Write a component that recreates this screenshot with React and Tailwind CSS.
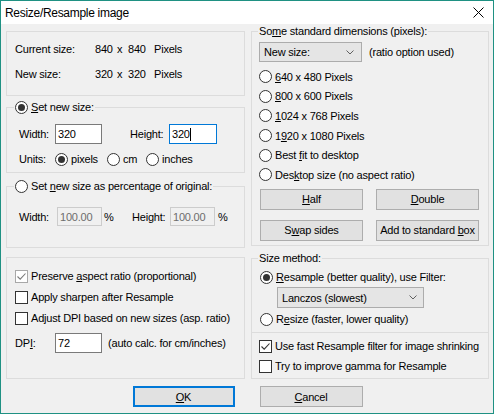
import React from "react";

function Radio({ on, children, className = "" }) {
  return (
    <div className={`flex items-center h-[14px] ${className}`}>
      <span className="w-[13px] h-[13px] rounded-full border border-[#333333] bg-white flex items-center justify-center shrink-0">
        {on && <span className="w-[7px] h-[7px] rounded-full bg-[#333333]" />}
      </span>
      <span className="ml-[3px] whitespace-nowrap">{children}</span>
    </div>
  );
}

function Check({ on, gray, children, className = "" }) {
  return (
    <div className={`flex items-center h-[14px] ${className}`}>
      <span className={`w-[13px] h-[13px] border bg-white flex items-center justify-center shrink-0 ${gray ? "border-[#a8a8a8]" : "border-[#333333]"}`}>
        {on && (
          <svg width="11" height="11" viewBox="0 0 11 11">
            <path d="M1.5 5.5 L4.2 8.2 L9.5 2.5" fill="none" stroke={gray ? "#7a7a7a" : "#333333"} strokeWidth="1.1" />
          </svg>
        )}
      </span>
      <span className="ml-[3px] whitespace-nowrap">{children}</span>
    </div>
  );
}

function Group({ label, left = "left-[6px]", className = "", children }) {
  return (
    <div className={`relative border border-[#dcdcdc] ${className}`}>
      {label && (
        <div className={`absolute -top-[8px] ${left} px-[1px] bg-[#f0f0f0] flex items-center h-[14px]`}>
          {label}
        </div>
      )}
      {children}
    </div>
  );
}

function Btn({ children, className = "" }) {
  return (
    <div className={`w-[103px] h-[21px] bg-[#e1e1e1] border border-[#adadad] flex items-center justify-center ${className}`}>
      <span className="whitespace-nowrap">{children}</span>
    </div>
  );
}

function Chevron() {
  return (
    <svg width="8" height="5" viewBox="0 0 8 5">
      <path d="M0.5 0.5 L4 4 L7.5 0.5" fill="none" stroke="#606060" strokeWidth="1" />
    </svg>
  );
}

function Input({ value, w, h = "h-[20px]", focus, disabled }) {
  const border = focus ? "border-[#0078d7]" : disabled ? "border-[#cccccc]" : "border-[#7a7a7a]";
  return (
    <div className={`${w} ${h} border ${border} ${disabled ? "bg-[#f0f0f0] text-[#6d6d6d]" : "bg-white"} flex items-center pl-[2px]`}>
      {value}
      {focus && <span className="w-px h-[13px] bg-black" />}
    </div>
  );
}

export default function App() {
  return (
    <div className="w-[494px] h-[414px] border border-[#1f9183] bg-[#f0f0f0] flex flex-col overflow-hidden text-[11px] leading-[14px] tracking-[-0.2px] text-black font-['Liberation_Sans',Arial,sans-serif]">
      <div className="h-[23px] bg-white flex items-center justify-between pl-[4px] pr-[9px] shrink-0">
        <span className="text-[12px] tracking-[-0.3px]">Resize/Resample image</span>
        <svg width="11" height="11" viewBox="0 0 11 11">
          <path d="M0.5 0.5 L10.5 10.5 M10.5 0.5 L0.5 10.5" stroke="#000" strokeWidth="1" />
        </svg>
      </div>

      <div className="pl-[5px] pr-[4px] pt-[7px]">
        <div className="flex gap-[6px]">
          {/* left column */}
          <div className="w-[239px] flex flex-col">
            <Group className="h-[65px] pt-[10px] pl-[8px]">
              <div className="flex h-[14px] items-center">
                <span className="w-[80px]">Current size:</span>
                <span className="w-[22px]">840</span>
                <span className="w-[11px]">x</span>
                <span className="w-[26px]">840</span>
                <span>Pixels</span>
              </div>
              <div className="flex h-[14px] items-center mt-[11px]">
                <span className="w-[80px]">New size:</span>
                <span className="w-[22px]">320</span>
                <span className="w-[11px]">x</span>
                <span className="w-[26px]">320</span>
                <span>Pixels</span>
              </div>
            </Group>

            <Group
              className="mt-[11px] h-[66px] pt-[16px] pl-[12px]"
              left="left-[7px]"
              label={<Radio on><u>S</u>et new size:</Radio>}
            >
              <div className="flex items-center">
                <span className="w-[36px]">Width:</span>
                <Input value="320" w="w-[47px]" />
                <span className="ml-[28px] w-[39px]">Height:</span>
                <Input value="320" w="w-[48px]" focus />
              </div>
              <div className="flex items-center mt-[8px] h-[14px]">
                <span className="w-[36px]">Units:</span>
                <Radio on className="w-[52px]">pixels</Radio>
                <Radio className="w-[39px]">cm</Radio>
                <Radio>inches</Radio>
              </div>
            </Group>

            <Group
              className="mt-[13px] h-[62px] pt-[20px] pl-[12px]"
              left="left-[7px]"
              label={<Radio>Set <u>n</u>ew size as percentage of original:</Radio>}
            >
              <div className="flex items-center">
                <span className="w-[38px]">Width:</span>
                <Input value="100.00" w="w-[45px]" h="h-[19px]" disabled />
                <span className="ml-[2px] w-[28px]">%</span>
                <span className="w-[38px]">Height:</span>
                <Input value="100.00" w="w-[45px]" h="h-[19px]" disabled />
                <span className="ml-[3px]">%</span>
              </div>
            </Group>

            <Group className="mt-[9px] h-[122px] pt-[11px] pl-[8px]">
              <div className="flex flex-col gap-[7px]">
                <Check on gray>Preserve <u>a</u>spect ratio (proportional)</Check>
                <Check>Apply sharpen after Resample</Check>
                <Check>Adjust DPI based on new sizes (asp. ratio)</Check>
              </div>
              <div className="flex items-center mt-[8px]">
                <span className="w-[40px]">DP<u>I</u>:</span>
                <Input value="72" w="w-[47px]" />
                <span className="ml-[6px]">(auto calc. for cm/inches)</span>
              </div>
            </Group>
          </div>

          {/* right column */}
          <div className="w-[238px] flex flex-col">
            <Group
              className="h-[215px] pt-[10px] pl-[7px]"
              label={<span>So<u>m</u>e standard dimensions (pixels):</span>}
            >
              <div className="flex items-center">
                <div className="w-[103px] h-[20px] bg-[#e5e5e5] border border-[#acacac] flex items-center justify-between pl-[4px] pr-[7px]">
                  <span>New size:</span>
                  <Chevron />
                </div>
                <span className="ml-[7px]">(ratio option used)</span>
              </div>
              <div className="mt-[5px] flex flex-col">
                <div className="h-[19.6px] flex items-center"><Radio><u>6</u>40 x 480 Pixels</Radio></div>
                <div className="h-[19.6px] flex items-center"><Radio><u>8</u>00 x 600 Pixels</Radio></div>
                <div className="h-[19.6px] flex items-center"><Radio><u>1</u>024 x 768 Pixels</Radio></div>
                <div className="h-[19.6px] flex items-center"><Radio>1<u>9</u>20 x 1080 Pixels</Radio></div>
                <div className="h-[19.6px] flex items-center"><Radio>Best <u>f</u>it to desktop</Radio></div>
                <div className="h-[19.6px] flex items-center"><Radio>Des<u>k</u>top size (no aspect ratio)</Radio></div>
              </div>
              <div className="flex mt-[4px] ml-[1px]">
                <Btn><u>H</u>alf</Btn>
                <Btn className="ml-[13px]"><u>D</u>ouble</Btn>
              </div>
              <div className="flex mt-[10px] ml-[1px]">
                <Btn>S<u>w</u>ap sides</Btn>
                <Btn className="ml-[13px]">Add to standard <u>b</u>ox</Btn>
              </div>
            </Group>

            <Group
              className="mt-[12px] h-[75px] pt-[11px] pl-[8px]"
              label={<span>Size method:</span>}
            >
              <Radio on><u>R</u>esample (better quality), use Filter:</Radio>
              <div className="mt-[3px] ml-[17px] w-[147px] h-[21px] bg-[#e5e5e5] border border-[#acacac] flex items-center justify-between pl-[4px] pr-[6px]">
                <span>Lanczos (slowest)</span>
                <Chevron />
              </div>
              <Radio className="mt-[4px]">R<u>e</u>size (faster, lower quality)</Radio>
            </Group>

            <Group className="h-[46px] border-t-0 pt-[6px] pl-[7px]">
              <div className="flex flex-col gap-[6px]">
                <Check on>Use fast Resample filter for image shrinking</Check>
                <Check>Try to improve gamma for Resample</Check>
              </div>
            </Group>
          </div>
        </div>

        <div className="flex justify-center gap-[25px] mt-[7px]">
          <div className="w-[102px] h-[21px] bg-[#e1e1e1] border-2 border-[#0078d7] flex items-center justify-center">
            <span><u>O</u>K</span>
          </div>
          <Btn className="w-[102px]"><u>C</u>ancel</Btn>
        </div>
      </div>
    </div>
  );
}
